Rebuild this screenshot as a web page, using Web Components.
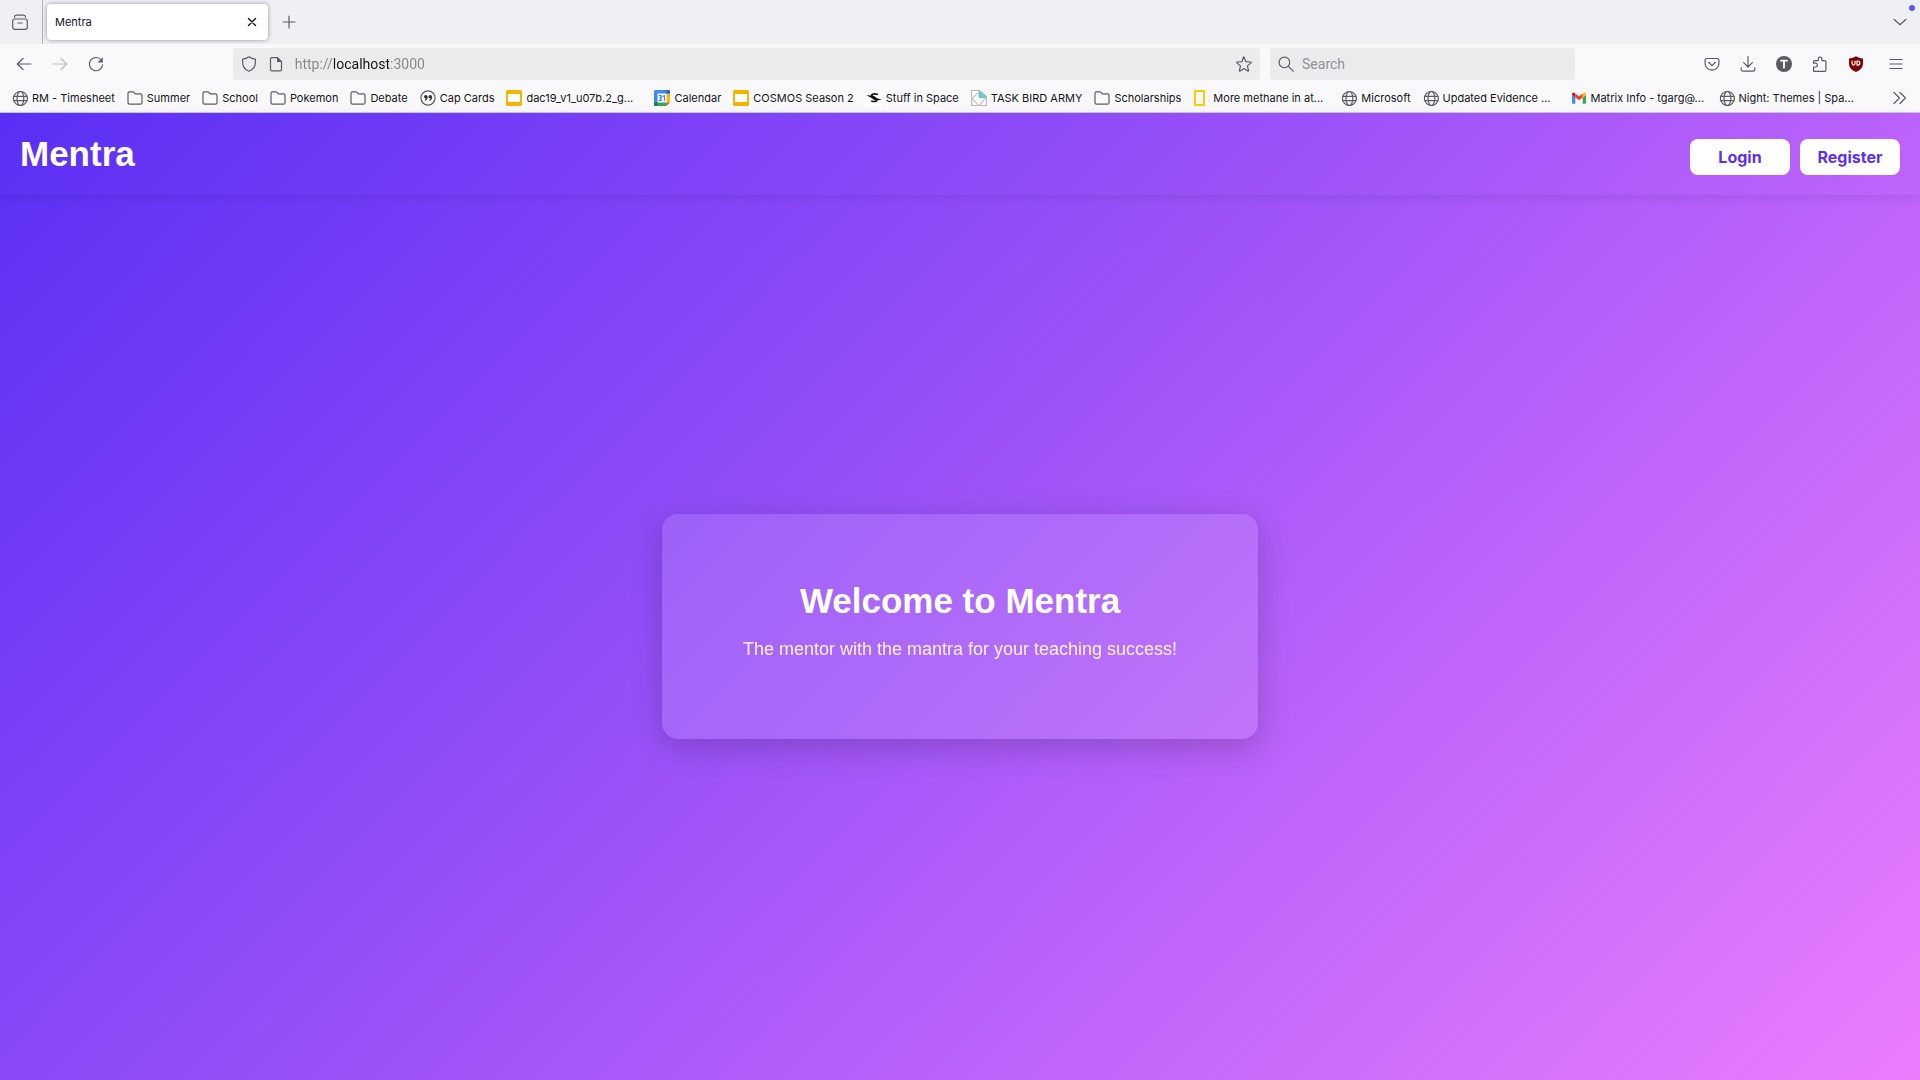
<!DOCTYPE html>
<html lang="en">
<head>
<meta charset="utf-8">
<title>Mentra</title>
<style>
    html, body {
        margin: 0;
        height: 100%;
    }

    body {
        font-family: Inter, "Liberation Sans", sans-serif;
    }
</style>
</head>
<body>
<browser-window>
    <browser-tabs slot="chrome">Mentra</browser-tabs>
    <browser-toolbar slot="chrome" url="http://localhost:3000"></browser-toolbar>
    <bookmark-bar slot="chrome">
        <bookmark-item icon="globe">RM - Timesheet</bookmark-item>
        <bookmark-item icon="folder">Summer</bookmark-item>
        <bookmark-item icon="folder">School</bookmark-item>
        <bookmark-item icon="folder">Pokemon</bookmark-item>
        <bookmark-item icon="folder">Debate</bookmark-item>
        <bookmark-item icon="quote">Cap Cards</bookmark-item>
        <bookmark-item icon="slides" long>dac19_v1_u07b.2_g...</bookmark-item>
        <bookmark-item icon="calendar">Calendar</bookmark-item>
        <bookmark-item icon="slides">COSMOS Season 2</bookmark-item>
        <bookmark-item icon="space">Stuff in Space</bookmark-item>
        <bookmark-item icon="bird">TASK BIRD ARMY</bookmark-item>
        <bookmark-item icon="folder">Scholarships</bookmark-item>
        <bookmark-item icon="frame" long>More methane in at...</bookmark-item>
        <bookmark-item icon="globe">Microsoft</bookmark-item>
        <bookmark-item icon="globe" long>Updated Evidence ...</bookmark-item>
        <bookmark-item icon="gmail" long>Matrix Info - tgarg@...</bookmark-item>
        <bookmark-item icon="globe" long>Night: Themes | Spa...</bookmark-item>
    </bookmark-bar>
    <mentra-page>
        <mentra-header slot="header">
            Mentra
            <mentra-button slot="actions">Login</mentra-button>
            <mentra-button slot="actions">Register</mentra-button>
        </mentra-header>
        <mentra-card>
            <span slot="title">Welcome to Mentra</span>
            The mentor with the mantra for your teaching success!
        </mentra-card>
    </mentra-page>
</browser-window>

<script>
// 16x16 artwork, stroked with the current colour unless a shape says otherwise
const icons = {
    view: '<path d="M2.5 3.2Q2.6 1.2 4.2 1.2h7.6q1.6 0 1.7 2"/><rect x=".7" y="5" width="14.6" height="10.3" rx="2"/><path d="M6 9h4"/>',
    close: '<path d="M4.5 4.5l7 7M11.5 4.500l-7 7" stroke-width="1.4"/>',
    plus: '<path d="M8 2v12M2 8h12"/>',
    chevron: '<path d="M2 5.3l6 5.4 6-5.4"/>',
    back: '<path d="M15 8H1.5M7 2.5L1.3 8 7 13.5"/>',
    forward: '<path d="M1 8h13.5M9 2.5L14.7 8 9 13.5"/>',
    reload: '<path d="M13.2 4A6.6 6.6 0 1 0 14.6 8.8"/><path d="M14.8 1.2v5.2H9.6z" fill="currentColor" stroke="none"/>',
    shield: '<path d="M8 .8c2 1.5 4 2.1 6.4 2.3v3.2c0 4.3-2.6 7.6-6.4 9-3.8-1.4-6.4-4.7-6.4-9V3.1C4 2.9 6 2.3 8 .8z"/>',
    page: '<path d="M3.5 1.6h6l4 4v7.8a1.4 1.4 0 0 1-1.4 1.4H3.9a1.4 1.4 0 0 1-1.4-1.4V3a1.4 1.4 0 0 1 1.4-1.4z"/><path d="M9 1v5h5z" fill="currentColor" stroke="none"/>',
    star: '<path d="M8 1.2l1.8 4.4 4.9.4c.6 0 .7.5.3.9l-3.6 3 1.1 4.6c.1.6-.3.8-.8.6L8 12.6l-3.8 2.5c-.5.2-.9-.1-.8-.6l1.1-4.6-3.6-3c-.4-.4-.2-.9.3-.9l4.9-.4L7.4 1.2q.3-.5.6 0z"/>',
    search: '<circle cx="6.4" cy="6.4" r="5.3"/><path d="M10.4 10.4l4.8 4.8"/>',
    pocket: '<path d="M2.6 2.5h10.800a1.500 1.500 0 0 1 1.500 1.500v3.500a6.900 6.600 0 0 1-13.800 0V4a1.500 1.500 0 0 1 1.500-1.500z"/><path d="M4.600 6.300L8 9.600l3.400-3.300"/>',
    download: '<path d="M8 .5v10.300M3.700 6.700L8 11l4.300-4.300M1.200 11.800v1.600a1.700 1.700 0 0 0 1.700 1.700h10.200a1.700 1.700 0 0 0 1.700-1.700v-1.600"/>',
    account: '<circle cx="8" cy="8" r="8" fill="#5b5b66" stroke="none"/><path d="M5 4.700h6M8 4.700v7" stroke="#fff" stroke-width="1.800"/>',
    puzzle: '<path d="M1.600 15.300V11h1.900a1.900 1.900 0 0 0 0-3.800H1.600V5.600q0-1 1-1h3.700V2.900a1.800 1.800 0 0 1 3.600 0v1.700h3q1 0 1 1v8.700q0 1-1 1z"/>',
    ublock: '<path d="M8 .2c2 1.300 4.200 2 7 2.200v4.800c0 4.200-2.600 7-7 8.700-4.400-1.700-7-4.500-7-8.700V2.400C3.800 2.200 6 1.500 8 .2z" fill="#800000" stroke="none"/><path d="M4.100 5v2.600a1.400 1.400 0 0 0 2.900 0V5M9 5v4.100h.8a2 2 0 0 0 0-4.100z" stroke="#fff"/>',
    menu: '<path d="M2 3.500h12M2 8h12M2 12.500h12"/>',
    overflow: '<path d="M2 2.500L7.500 8 2 13.500M8 2.500L13.500 8 8 13.500"/>',
    globe: '<circle cx="8.400" cy="8.500" r="7"/><ellipse cx="8.400" cy="8.500" rx="3.400" ry="7"/><path d="M2 6.300h12.800M2 10.700h12.800"/>',
    folder: '<path d="M1 12.700V3.300a1.500 1.500 0 0 1 1.500-1.500h3.300q.7 0 1.200.6l1.200 1.400h5.300A1.500 1.500 0 0 1 15 5.300v7.400a1.500 1.500 0 0 1-1.500 1.500h-11A1.500 1.500 0 0 1 1 12.700z"/>',
    quote: '<circle cx="8" cy="8" r="7.100"/><g fill="#333" stroke="none"><circle cx="5.800" cy="6.800" r="1.800"/><circle cx="10.300" cy="6.800" r="1.800"/><path d="M7.600 6.800q.2 3-2.500 4l-.4-.8q1.400-.8 1.300-2.200zM12.100 6.800q.2 3-2.500 4l-.4-.8q1.400-.8 1.300-2.200z"/></g>',
    slides: '<rect width="16" height="16" rx="1.500" fill="#f5b400" stroke="none"/><path d="M2 4h12v8H2z" fill="#fff" stroke="none"/>',
    calendar: '<g stroke="none"><path d="M1.500 0h13A1.500 1.500 0 0 1 16 1.500V4H12v8H4v4H1.500A1.500 1.500 0 0 1 0 14.500v-13A1.500 1.500 0 0 1 1.500 0z" fill="#4285f4"/><path d="M3.500 3.500h9v9h-9z" fill="#fff"/><path d="M12.500 3.500H16v9h-3.500z" fill="#fbbc04"/><path d="M3.500 12.500h9V16h-9z" fill="#34a853"/><path d="M0 12.500h3.500V16h-2A1.500 1.500 0 0 1 0 14.500z" fill="#188038"/><path d="M12.500 12.500H16L12.500 16z" fill="#ea4335"/><path d="M12.500 0h2A1.500 1.500 0 0 1 16 1.500v2h-3.500z" fill="#1967d2"/></g><path d="M5 5.700h2.200v1.700L6 7.900l1.200.4v2H5M9 6.300l1.500-.7v5" stroke="#4285f4"/>',
    space: '<path d="M0 0h16v16H0z" fill="#fff" stroke="none"/><path d="M11.300 4.200Q5.800 3.200 5.600 5.300C5.600 7.500 11.300 8 11 10.200q-.6 2-5.200 1" stroke="#111" stroke-width="1.600"/><path d="M.3 5.300l7 .2 3.200 2.400 5.300 1.800-6.800.8-3.400-2.500z" fill="#111" stroke="none"/>',
    bird: '<path d="M.5 15.500V.5h8l7 6v9z" stroke="#b9b9bc" fill="#fff"/><path d="M8 1.500V7.500h7.300z" fill="#40e0d0" stroke="#5b9e98" stroke-width=".6"/><path d="M.8 8.500l7.500-7M.8 8.500l7 7 7.200-7.500" stroke="#c6c6c8"/>',
    frame: '<path d="M2 1h9v14H2z" stroke="#fc0" stroke-width="2" stroke-linejoin="miter"/>',
    gmail: '<g stroke="none"><path d="M1 5l3.300 2.500v6.300H2a1 1 0 0 1-1-1z" fill="#4285f4"/><path d="M11.700 7.500L15 5v7.800a1 1 0 0 1-1 1h-2.300z" fill="#34a853"/><path d="M4.300 3.400L8 6.300l3.700-2.900v4.100L8 10.300 4.300 7.500z" fill="#ea4335"/><path d="M1 5V4q0-1.700 1.700-1.600L4.300 3.500v4z" fill="#c5221f"/><path d="M11.700 3.500l1.600-1.100Q15 2.300 15 4v1l-3.300 2.500z" fill="#fbbc04"/></g>'
};

function define(name, html, init) {
    const template = document.createElement('template');
    template.innerHTML = html;

    customElements.define(name, class extends HTMLElement {
        connectedCallback() {
            if (this.shadowRoot) return;
            this.attachShadow({ mode: 'open' });
            this.shadowRoot.appendChild(template.content.cloneNode(true));
            if (init) init.call(this, this.shadowRoot);
        }
    });
}

define('ui-icon', `
<style>
    :host {
        display: block;
        flex: none;
        width: 16px;
        height: 16px;
    }

    svg {
        display: block;
        width: 100%;
        height: 100%;
        fill: none;
        stroke: currentColor;
        stroke-width: 1.2;
        stroke-linecap: round;
        stroke-linejoin: round;
    }
</style>
<svg viewBox="0 0 16 16" aria-hidden="true"></svg>
`, function (root) {
    root.querySelector('svg').innerHTML = icons[this.getAttribute('name')] || '';
});

define('icon-button', `
<style>
    :host {
        display: block;
        flex: none;
        color: #5b5b66;
    }

    :host([disabled]) {
        color: #bdbdc2;
    }

    button {
        display: grid;
        place-items: center;
        width: 32px;
        height: 32px;
        padding: 0;
        border: 0;
        border-radius: 4px;
        background: none;
        color: inherit;
    }
</style>
<button type="button"></button>
`, function (root) {
    const button = root.querySelector('button');
    button.setAttribute('aria-label', this.getAttribute('label'));
    button.disabled = this.hasAttribute('disabled');
    const icon = document.createElement('ui-icon');
    icon.setAttribute('name', this.getAttribute('icon'));
    button.appendChild(icon);
});

define('browser-window', `
<style>
    :host {
        display: flex;
        flex-direction: column;
        min-height: 100%;
        background: #f9f9fb;
    }
</style>
<slot name="chrome"></slot>
<slot></slot>
`);

define('browser-tabs', `
<style>
    :host {
        display: flex;
        position: relative;
        align-items: center;
        height: 44px;
        padding: 0 4px;
        background: #f0f0f4;
        color: #15141a;
        font-size: 11px;
    }

    .view {
        display: flex;
        align-self: stretch;
        align-items: center;
        padding-right: 6px;
        border-right: 1px solid #b4b4ba;
    }

    .tab {
        display: flex;
        align-items: center;
        justify-content: space-between;
        box-sizing: border-box;
        width: 221px;
        height: 36px;
        margin: 0 5px 0 4px;
        padding-left: 8px;
        border-radius: 4px;
        background: #fff;
        box-shadow: 0 0 4px rgba(0, 0, 0, .4);
    }

    .tab icon-button {
        color: #15141a;
    }

    .list {
        margin-left: auto;
    }

    .dot {
        position: absolute;
        top: 5px;
        right: 5px;
        width: 6px;
        height: 6px;
        border-radius: 50%;
        background: #5b5bf0;
    }
</style>
<div class="view"><icon-button icon="view" label="Firefox View"></icon-button></div>
<div class="tab" role="tab" aria-selected="true">
    <slot></slot>
    <icon-button icon="close" label="Close tab"></icon-button>
</div>
<icon-button icon="plus" label="New tab"></icon-button>
<icon-button class="list" icon="chevron" label="List all tabs"></icon-button>
<div class="dot"></div>
`);

define('browser-toolbar', `
<style>
    :host {
        display: flex;
        align-items: center;
        gap: 4px;
        padding: 4px 8px 0;
        color: #5b5b66;
    }

    .space {
        flex: 113;
    }

    .field {
        display: flex;
        align-items: center;
        box-sizing: border-box;
        height: 32px;
        padding: 0 8px;
        border-radius: 4px;
        background: #ebebed;
    }

    .url {
        flex: 1014;
        gap: 11px;
        margin-right: 6px;
    }

    .search {
        flex: 290;
        gap: 8px;
    }

    .menu {
        margin-left: 4px;
    }

    input {
        flex: 1;
        min-width: 0;
        padding: 0;
        border: 0;
        outline: 0;
        background: none;
        color: #15141a;
        font: 14px/20px Roboto, sans-serif;
    }

    input::placeholder {
        color: #929296;
    }

    /* the host name stands out from the scheme and the port */
    #url {
        background: linear-gradient(90deg, #85858a 39px, #15141a 39px 94px, #85858a 94px);
        background-clip: text;
        -webkit-background-clip: text;
        -webkit-text-fill-color: transparent;
    }
</style>
<icon-button icon="back" label="Back"></icon-button>
<icon-button icon="forward" label="Forward" disabled></icon-button>
<icon-button icon="reload" label="Reload"></icon-button>
<div class="space"></div>
<div class="field url">
    <ui-icon name="shield"></ui-icon>
    <ui-icon name="page"></ui-icon>
    <input id="url" aria-label="Address">
    <ui-icon name="star"></ui-icon>
</div>
<div class="field search">
    <ui-icon name="search"></ui-icon>
    <input placeholder="Search" aria-label="Search">
</div>
<div class="space"></div>
<icon-button icon="pocket" label="Save to Pocket"></icon-button>
<icon-button icon="download" label="Downloads"></icon-button>
<icon-button icon="account" label="Account"></icon-button>
<icon-button icon="puzzle" label="Extensions"></icon-button>
<icon-button icon="ublock" label="uBlock Origin"></icon-button>
<icon-button class="menu" icon="menu" label="Menu"></icon-button>
`, function (root) {
    root.querySelector('#url').value = this.getAttribute('url');
});

define('bookmark-bar', `
<style>
    :host {
        display: flex;
        align-items: center;
        box-sizing: border-box;
        height: 33px;
        padding: 4px 4px 0 12px;
        border-bottom: 1px solid #cccccf;
    }

    nav {
        display: flex;
        flex: 1;
        gap: 12px;
        min-width: 0;
        overflow: hidden;
    }
</style>
<nav aria-label="Bookmarks"><slot></slot></nav>
<icon-button icon="overflow" label="More bookmarks"></icon-button>
`);

define('bookmark-item', `
<style>
    :host {
        display: block;
        flex: none;
        color: #15141a;
        font-size: 11px;
    }

    :host([long]) {
        width: 136px;
    }

    a {
        display: flex;
        align-items: center;
        gap: 4px;
        height: 24px;
        color: inherit;
        text-decoration: none;
        white-space: nowrap;
    }

    ui-icon {
        color: #5b5b66;
    }
</style>
<a href="#"><slot></slot></a>
`, function (root) {
    const icon = document.createElement('ui-icon');
    icon.setAttribute('name', this.getAttribute('icon'));
    root.querySelector('a').prepend(icon);
});

define('mentra-page', `
<style>
    :host {
        display: flex;
        flex: 1;
        flex-direction: column;
        background: linear-gradient(135deg, #5a2ff5, #a255f9, #eb7dfd);
        color: #fff;
        font-family: "Liberation Sans", Arial, sans-serif;
    }

    main {
        display: grid;
        flex: 1;
        place-items: center;
        padding-bottom: 22px;
    }
</style>
<slot name="header"></slot>
<main><slot></slot></main>
`);

define('mentra-header', `
<style>
    :host {
        display: flex;
        align-items: flex-end;
        justify-content: space-between;
        padding: 20px;
        box-shadow: 0 2px 10px rgba(0, 0, 0, .1);
    }

    h1 {
        margin: 0;
        font-size: 35px;
        line-height: 42px;
    }

    .actions {
        display: flex;
        gap: 10px;
    }
</style>
<h1><slot></slot></h1>
<div class="actions"><slot name="actions"></slot></div>
`);

define('mentra-button', `
<style>
    :host {
        display: block;
    }

    button {
        display: block;
        width: 100px;
        height: 36px;
        padding: 0;
        border: 0;
        border-radius: 8px;
        background: #fff;
        color: #5b2ff5;
        font: bold 16px Inter, sans-serif;
    }
</style>
<button type="button"><slot></slot></button>
`);

define('mentra-card', `
<style>
    :host {
        display: block;
        box-sizing: border-box;
        width: 596px;
        max-width: 100%;
        padding: 66px 32px 78px;
        border-radius: 16px;
        background: rgba(255, 255, 255, .12);
        box-shadow: 0 8px 32px rgba(0, 0, 0, .2);
        text-align: center;
    }

    h2 {
        margin: 0 0 16px;
        font-size: 35px;
        line-height: 42px;
    }

    p {
        margin: 0;
        font-size: 18px;
        line-height: 23px;
        opacity: .9;
    }
</style>
<h2><slot name="title"></slot></h2>
<p><slot></slot></p>
`);
</script>
</body>
</html>
